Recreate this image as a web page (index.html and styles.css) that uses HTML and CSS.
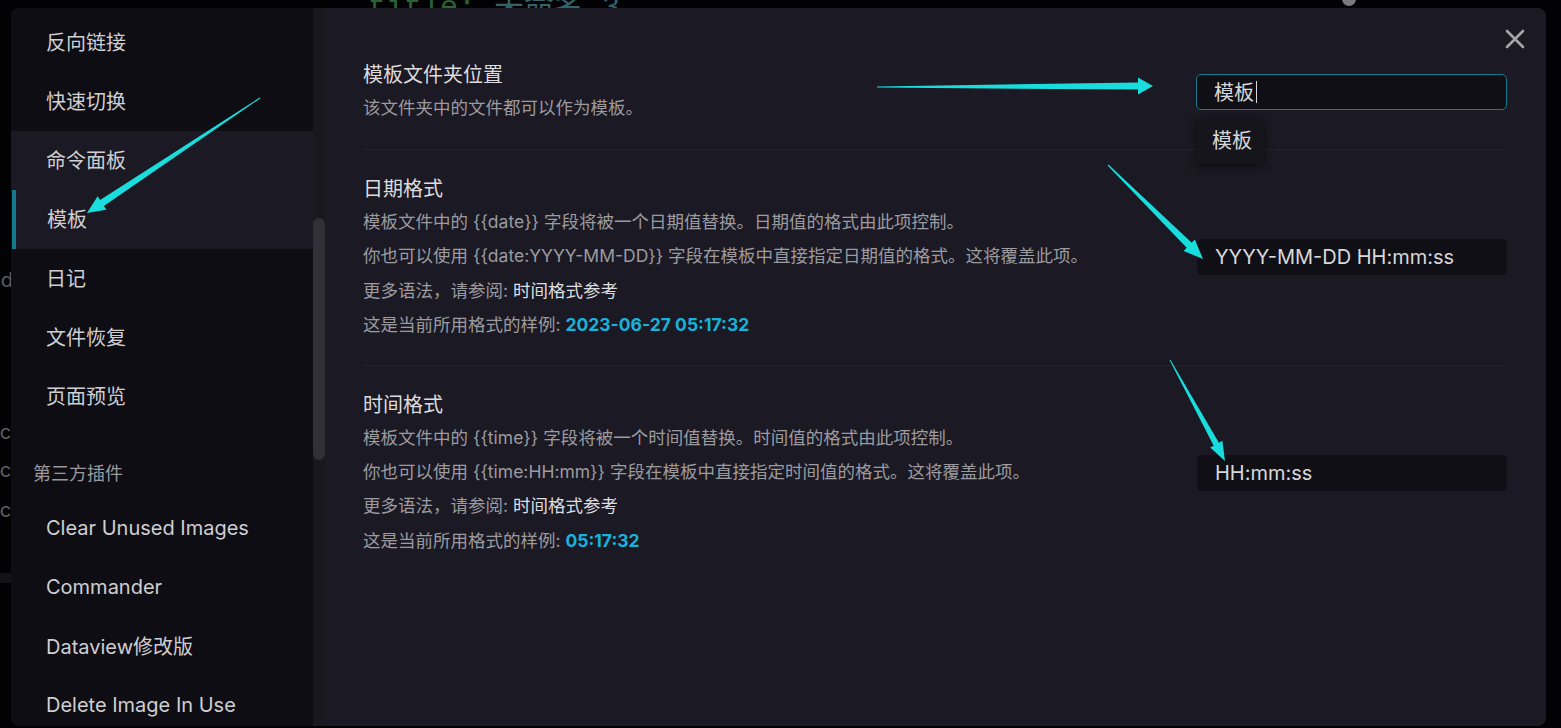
FILE: index.html
```html
<!DOCTYPE html>
<html lang="zh-CN">
<head>
<meta charset="utf-8">
<title>模板设置</title>
<link rel="stylesheet" href="styles.css">
</head>
<body>
<div class="editor">
  <div class="editor-top">
    <span class="yaml-key">title:</span> <span class="yaml-val">未命名 3</span>
    <span class="top-dot"></span>
  </div>
  <div class="edge">
    <div class="edge-line l1">ed</div>
    <div class="edge-line l2">ec</div>
    <div class="edge-line l3">ec</div>
    <div class="edge-line l4">ec</div>
    <div class="edge-band"></div>
  </div>
</div>

<div class="modal">
  <nav class="sidebar">
    <div class="nav-item">反向链接</div>
    <div class="nav-item">快速切换</div>
    <div class="nav-item hover">命令面板</div>
    <div class="nav-item active">模板</div>
    <div class="nav-item">日记</div>
    <div class="nav-item">文件恢复</div>
    <div class="nav-item">页面预览</div>
    <div class="nav-heading">第三方插件</div>
    <div class="nav-item">Clear Unused Images</div>
    <div class="nav-item">Commander</div>
    <div class="nav-item">Dataview修改版</div>
    <div class="nav-item">Delete Image In Use</div>
  </nav>
  <div class="track"><div class="thumb"></div></div>
  <main class="content">
    <div class="close" aria-label="关闭">
      <svg width="20" height="20" viewBox="0 0 20 20"><path d="M2 2 L18 18 M18 2 L2 18" stroke="#a6a6a6" stroke-width="2.6" stroke-linecap="round"/></svg>
    </div>

    <section class="setting first">
      <div class="info">
        <div class="title">模板文件夹位置</div>
        <div class="desc">
          <div class="line">该文件夹中的文件都可以作为模板。</div>
        </div>
      </div>
      <div class="control">
        <div class="input focused">模板<span class="caret"></span></div>
        <div class="suggest">模板</div>
      </div>
    </section>

    <section class="setting">
      <div class="info">
        <div class="title">日期格式</div>
        <div class="desc">
          <div class="line">模板文件中的 {{date}} 字段将被一个日期值替换。日期值的格式由此项控制。</div>
          <div class="line">你也可以使用 {{date:YYYY-MM-DD}} 字段在模板中直接指定日期值的格式。这将覆盖此项。</div>
          <div class="line">更多语法，请参阅: <span class="link">时间格式参考</span></div>
          <div class="line">这是当前所用格式的样例: <span class="sample">2023-06-27 05:17:32</span></div>
        </div>
      </div>
      <div class="control">
        <div class="input">YYYY-MM-DD HH:mm:ss</div>
      </div>
    </section>

    <section class="setting last">
      <div class="info">
        <div class="title">时间格式</div>
        <div class="desc">
          <div class="line">模板文件中的 {{time}} 字段将被一个时间值替换。时间值的格式由此项控制。</div>
          <div class="line">你也可以使用 {{time:HH:mm}} 字段在模板中直接指定时间值的格式。这将覆盖此项。</div>
          <div class="line">更多语法，请参阅: <span class="link">时间格式参考</span></div>
          <div class="line">这是当前所用格式的样例: <span class="sample">05:17:32</span></div>
        </div>
      </div>
      <div class="control">
        <div class="input">HH:mm:ss</div>
      </div>
    </section>
  </main>
</div>

<svg class="arrows" width="1561" height="728" viewBox="0 0 1561 728">
  <polygon points="877,87.6 1138,89.6 1138,94.5 1153,86 1138,77.5 1138,82.4 877,86.4"/>
  <polygon points="259.7,97.6 100.1,200.1 97.6,196.3 87,213 106.4,209.7 103.9,205.9 260.3,98.4"/>
  <polygon points="1107.6,165.4 1186.7,247.8 1183.6,251.0 1203,259 1194.8,239.6 1191.7,242.8 1108.4,164.6"/>
  <polygon points="1169.6,360.2 1213.7,445.7 1210.2,447.6 1225,461 1222.4,440.8 1218.9,442.8 1170.4,359.8"/>
</svg>
</body>
</html>
```
FILE: styles.css
```css
* { box-sizing: border-box; }

html, body {
  margin: 0;
  padding: 0;
}

body {
  width: 1561px;
  height: 728px;
  overflow: hidden;
  position: relative;
  background: #050409;
  font-family: "Inter", "Noto Sans CJK SC", sans-serif;
}

/* background editor that peeks out around the modal */
.editor {
  width: 100%;
  height: 100%;
  background: #020204;
}

.editor-top {
  height: 9px;
  overflow: hidden;
  display: flex;
  align-items: flex-end;
  padding-left: 368px;
  font-family: "Liberation Mono", monospace;
  font-size: 30px;
  line-height: 30px;
  gap: 18px;
  position: relative;
}

.editor-top > span:not(.top-dot) {
  transform: translateY(14px);
}

.yaml-key { color: #2a6235; }
.yaml-val { color: #34626a; }

.top-dot {
  position: absolute;
  left: 1342px;
  top: -8px;
  width: 14px;
  height: 14px;
  border-radius: 50%;
  background: #7a7a7f;
}

.edge {
  width: 11px;
  overflow: hidden;
  display: flex;
  flex-direction: column;
  font-size: 20px;
  line-height: 22px;
  color: #5e5e63;
}

.edge-line {
  margin-left: -12px;
  white-space: nowrap;
}

.edge-line.l1 { margin-top: 260px; margin-left: -11px; }
.edge-line.l2 { margin-top: 130px; }
.edge-line.l3 { margin-top: 16px; }
.edge-line.l4 { margin-top: 18px; }

.edge-band {
  margin-top: 52px;
  height: 10px;
  background: #121116;
}

/* modal */
.modal {
  position: absolute;
  left: 11px;
  top: 8px;
  width: 1535px;
  height: 718px;
  border-radius: 8px;
  overflow: hidden;
  display: flex;
  background: #1b1923;
}

.sidebar {
  width: 302px;
  flex-shrink: 0;
  background: #0e0d14;
  padding-top: 5px;
  overflow: hidden;
}

.nav-item {
  height: 59px;
  display: flex;
  align-items: center;
  padding-left: 35px;
  padding-bottom: 2px;
  font-size: 20px;
  color: #cfcfd2;
  white-space: nowrap;
}

.nav-item.hover,
.nav-item.active {
  background: #1b1923;
}

.nav-item.active {
  border-left: 4px solid #16788c;
  padding-left: 31px;
  margin-left: 1px;
}

.nav-heading {
  margin-top: 36px;
  margin-bottom: 13px;
  height: 24px;
  line-height: 24px;
  padding-left: 22px;
  font-size: 18px;
  color: #9a9a9e;
}

.track {
  width: 13px;
  flex-shrink: 0;
  background: #19181e;
  padding-top: 210px;
  border-top-left-radius: 6px;
}

.thumb {
  width: 12px;
  height: 242px;
  border-radius: 6px;
  background: #312f38;
}

.content {
  flex: 1;
  position: relative;
  padding: 53px 39px 0 37px;
}

.close {
  position: absolute;
  top: 21px;
  right: 21px;
  width: 20px;
  height: 20px;
}

.close svg { display: block; }

.setting {
  display: flex;
  align-items: center;
  justify-content: space-between;
  padding: 25px 0 23px;
  border-bottom: 1px solid #21252d;
}

.setting.first {
  padding-top: 0;
  padding-bottom: 24px;
}

.setting.last {
  border-bottom: none;
}

.title {
  font-size: 20px;
  line-height: 28px;
  color: #dcdcde;
}

.desc {
  margin-top: 2px;
  font-size: 17.5px;
  line-height: 34.2px;
  color: #9b9ba0;
  white-space: nowrap;
}

.link { color: #dedee0; }

.sample {
  color: #19b2da;
  font-weight: 700;
}

.control {
  position: relative;
  width: 310px;
  flex-shrink: 0;
  margin-bottom: 3px;
}

.input {
  height: 36px;
  border-radius: 5px;
  background: #100f16;
  border: 1px solid #100f16;
  padding: 0 17px;
  display: flex;
  align-items: center;
  font-size: 20px;
  color: #d8d8da;
  white-space: nowrap;
}

.input.focused {
  border-color: #1a7a8c;
  margin-left: -1px;
  width: 311px;
}

.caret {
  display: inline-block;
  width: 1px;
  height: 22px;
  margin-left: 2px;
  background: #d8d8da;
}

.suggest {
  position: absolute;
  top: 44px;
  left: 0;
  width: 67px;
  height: 46px;
  line-height: 46px;
  padding-left: 15px;
  font-size: 20px;
  color: #d8d8da;
  background: #16151c;
  border-radius: 4px;
  box-shadow: 0 2px 8px rgba(0, 0, 0, 0.55);
}

.arrows {
  position: absolute;
  left: 0;
  top: 0;
  pointer-events: none;
}

.arrows polygon {
  fill: #19dcdc;
}
```
